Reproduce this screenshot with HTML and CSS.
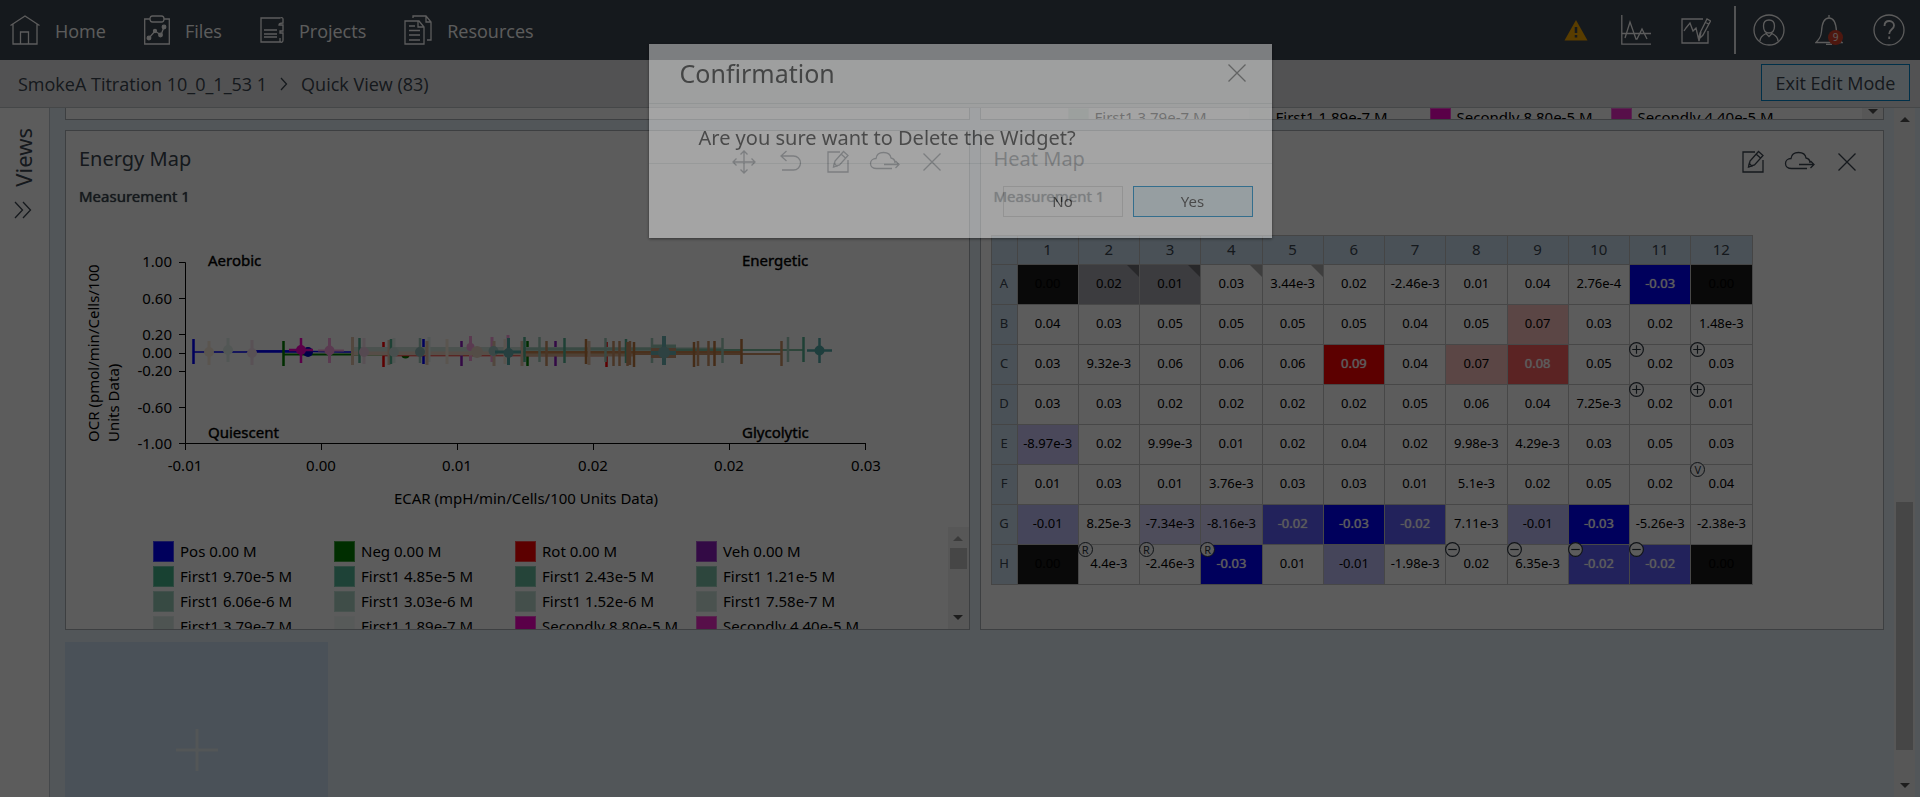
FILE: index.html
```html
<!DOCTYPE html>
<html lang="en">
<head>
<meta charset="utf-8">
<title>Quick View</title>
<link rel="stylesheet" href="styles.css">
</head>
<body>
<svg class="defs" width="0" height="0" aria-hidden="true">
  <symbol id="i-move" viewBox="0 0 24 24"><path d="M12 1v22M1 12h22M8.500 4.500 12 1l3.500 3.500M8.500 19.500 12 23l3.500-3.500M4.500 8.500 1 12l3.500 3.500M19.500 8.500 23 12l-3.500 3.500"/></symbol>
  <symbol id="i-undo" viewBox="0 0 24 24"><path d="M7.500 1 2 6l5.500 5M2 6h12.500a7 7 0 0 1 0 14H3"/></symbol>
  <symbol id="i-edit" viewBox="0 0 24 24"><path d="M14 2H2v20h20V10M8 16.500 9 11l8.500-9.500 4.500 4L13.500 15 8 16.500M15 4l4.500 4"/><path d="m7.500 17 .8-3.500 2.500 2.500z" class="solid"/></symbol>
  <symbol id="i-cloud" viewBox="0 0 32 24"><path d="M23 18.500H7.500C4 18.500 1.500 16.500 1.500 13.500S4 8.500 7 8.500C7.500 4.500 10.500 2.500 14.500 2.500s7 2 7.500 5.500c2.500.5 4 2 4 5M15 14.500h15M26.500 11l3.500 3.500-3.500 3.500"/></symbol>
  <symbol id="i-close" viewBox="0 0 18 18"><path d="m.5.5 17 17M17.500.5l-17 17"/></symbol>
  <symbol id="i-plus" viewBox="0 0 16 16"><circle cx="8" cy="8" r="6.500"/><path d="M4 8h8M8 4v8"/></symbol>
  <symbol id="i-minus" viewBox="0 0 16 16"><circle cx="8" cy="8" r="6.500"/><path d="M4 8h8"/></symbol>
</svg>

<header class="topbar">
  <nav class="nav">
    <a class="nav-item" href="#">
      <svg class="icon" width="30" height="30" viewBox="0 0 30 30"><path d="M.5 10.500 15 1l14.500 9.500M3 9v20h24V9M10.500 29V17h8v12"/></svg>
      <span>Home</span></a>
    <a class="nav-item" href="#">
      <svg class="icon" width="26" height="30" viewBox="0 0 26 30"><path d="M6 4H.7v25h24.600V4H20M8.500 1h9q2.500 0 2.500 3t-2.500 3h-9Q6 7 6 4t2.500-3zM5 23l6-7 6 4 3-8"/><g class="solid"><circle cx="5" cy="23" r="1.800"/><circle cx="11" cy="16" r="1.500"/><circle cx="16.500" cy="20" r="1.800"/><circle cx="20" cy="12" r="1.800"/></g></svg>
      <span>Files</span></a>
    <a class="nav-item" href="#">
      <svg class="icon" width="24" height="30" viewBox="0 0 24 30"><path d="M20 3H1v24h20M20 3q3-1 3 1v4q-4 0-4 2 0 0 4 0v6h-3v2h3v7q0 3-3 2v-4M4 15h13M4 19h13M4 22h13"/></svg>
      <span>Projects</span></a>
    <a class="nav-item" href="#">
      <svg class="icon" width="28" height="30" viewBox="0 0 28 30"><path d="M1 6h14l5 6v17H1zM14 6v6h6M5 11h6M5 15.500h11M5 20h11M5 25h11M9 3V1h13l5 6v18h-4M22 1v6h5"/></svg>
      <span>Resources</span></a>
  </nav>
  <div class="tools">
    <button class="tool" aria-label="Warnings"><svg width="24" height="22" viewBox="0 0 24 22"><path d="M12 1 23.500 21.500H.5z" fill="#f5a800"/><path d="M12 8v6M12 16v2.500" stroke="#3b4550" stroke-width="2.500"/></svg></button>
    <button class="tool" aria-label="Chart"><svg class="icon" width="30" height="30" viewBox="0 0 30 30"><path d="M.8 0v29.200H30M1 18.500h29M4 23 9 7l6 17h1l5-10 5 10"/></svg></button>
    <button class="tool" aria-label="Edit chart"><svg class="icon" width="30" height="30" viewBox="0 0 30 30"><path d="M22 4H1v24h26V16M3 16l2-3 4-5 3 8 3-3 3 13 2-9M17.500 24.500 19 18 26 4l3.500 2L22 20l-4.500 4.500M24 7l3.500 2"/></svg></button>
    <span class="divider"></span>
    <button class="tool" aria-label="Account"><svg class="icon" width="32" height="32" viewBox="0 0 32 32"><circle cx="16" cy="16" r="15"/><path d="M16 6c-4 0-5.500 3-5.500 6 0 4 2 7 5.500 7s5.500-3 5.500-7c0-3-1.500-6-5.500-6zM7 27c0-4 3-6 6-7.500l3 3 3-3c3 1.500 6 3.500 6 7.500"/></svg></button>
    <button class="tool bell" aria-label="Notifications"><svg class="icon" width="28" height="30" viewBox="0 0 28 30"><path d="M14 0v3M1 27.500h26c-4-4-5-6-5.500-11C21 7 19 3 14 3S7 7 6.500 16.500C6 21.500 5 23.500 1 27.500zM11 29.500h6"/></svg><span class="count">9</span></button>
    <button class="tool" aria-label="Help"><svg class="icon" width="32" height="32" viewBox="0 0 32 32"><circle cx="16" cy="16" r="15"/><path d="M11.500 12c0-3 2-5 4.800-5s4.700 2 4.700 4.500c0 4-4.800 3.500-4.800 8.500M16.200 22.500v2.500" stroke-width="1.800"/></svg></button>
  </div>
</header>

<div class="crumbbar">
  <a class="crumb" href="#">SmokeA Titration 10_0_1_53 1</a>
  <svg class="icon dark" width="8" height="14" viewBox="0 0 8 14"><path d="m1 1 5.500 6L1 13"/></svg>
  <span class="crumb">Quick View (83)</span>
  <button class="exit">Exit Edit Mode</button>
</div>

<div class="workspace">
  <aside class="side">
    <span class="side-label">Views</span>
    <button class="side-toggle" aria-label="Expand views"><svg class="icon dark" width="18" height="18" viewBox="0 0 18 18"><path d="m1 1 7.500 8L1 17M9 1l7.500 8L9 17"/></svg></button>
  </aside>

  <main class="board">
    <section class="panel cut"></section>
    <section class="panel cut legend-wrap">
      <ul class="legend">
        <li><i class="c12"></i>First1 3.79e-7 M</li><li><i class="c13"></i>First1 1.89e-7 M</li><li><i class="c14"></i>Secondly 8.80e-5 M</li><li><i class="c15"></i>Secondly 4.40e-5 M</li>
      </ul>
      <div class="bar"><b class="down"></b></div>
    </section>

    <section class="panel">
      <div class="panel-head">
        <h2>Energy Map</h2>
        <div class="actions">
          <button aria-label="Move"><svg class="icon dark" width="24" height="24"><use href="#i-move"/></svg></button>
          <button aria-label="Undo"><svg class="icon dark" width="24" height="24"><use href="#i-undo"/></svg></button>
          <button aria-label="Edit"><svg class="icon dark" width="24" height="24"><use href="#i-edit"/></svg></button>
          <button aria-label="Export"><svg class="icon dark" width="32" height="24"><use href="#i-cloud"/></svg></button>
          <button aria-label="Delete"><svg class="icon dark" width="18" height="18"><use href="#i-close"/></svg></button>
        </div>
      </div>
      <h3>Measurement 1</h3>
      <svg class="chart" width="882" height="312" viewBox="66 215 882 312">
        <g class="axis"><path d="M179 262.500h6.500v181h680M179 298.500h6.500M179 334.500h6.500M179 353.500h6.500M179 371.500h6.500M179 407.500h6.500M179 443.500h6.500v6.500M321.500 443v7M457.500 443v7M593.500 443v7M729.500 443v7M865.500 443v7"/></g>
        <g class="ylab"><text x="172" y="267">1.00</text><text x="172" y="304">0.60</text><text x="172" y="340">0.20</text><text x="172" y="358">0.00</text><text x="172" y="376">-0.20</text><text x="172" y="413">-0.60</text><text x="172" y="449">-1.00</text></g>
        <g class="xlab"><text x="185" y="471">-0.01</text><text x="321" y="471">0.00</text><text x="457" y="471">0.01</text><text x="593" y="471">0.02</text><text x="729" y="471">0.02</text><text x="866" y="471">0.03</text><text x="526" y="504">ECAR (mpH/min/Cells/100 Units Data)</text></g>
        <text transform="translate(99 442) rotate(-90)">OCR (pmol/min/Cells/100</text>
        <text transform="translate(119 442) rotate(-90)">Units Data)</text>
        <g fill="none">
          <path stroke="#0000ff" stroke-width="1.500" d="M193 352h12M213 352h11M232 352h14l10-1h27l60 1h40"/>
          <path stroke="#0000ff" stroke-width="2.500" d="M252 351.500h52M193.500 339v25M423.500 339v25"/>
          <path stroke="#008000" stroke-width="2" d="M283 354.500h215"/>
          <circle cx="405.500" cy="354" r="4.500" fill="#008000"/>
          <path stroke="#008000" stroke-width="2.500" d="M283.500 341v25M527.500 341v25"/>
          <path stroke="#ff0000" stroke-width="1.500" d="M383 355.500h224"/>
          <path stroke="#ff0000" stroke-width="2.500" d="M383.500 342v25M606.500 342v25"/>
          <path stroke="#8e1cc0" stroke-width="2.500" d="M461.500 341v25M555.500 341v25"/>
          <path stroke="#faa1de" stroke-width="3" d="M458 350h66M329.500 338v25M470.500 336v25M492 337v25M508 335v20"/>
          <path stroke="#cfe3dc" stroke-width="5" d="M352 349.500h300"/>
          <path stroke="#9fcbb9" stroke-width="3" d="M522 349h200"/>
          <path stroke="#7dbfa0" stroke-width="2" d="M652 350h152"/>
          <path stroke="#efd6c4" stroke-width="4" d="M352 353.500h170"/>
          <path stroke="#cc8850" stroke-width="3" d="M522 352.500h220"/>
          <path stroke="#d9b394" stroke-width="3" d="M522 355h112"/>
          <path stroke="#cc9468" stroke-width="2" d="M634 354h148"/>
          <path stroke="#f8eadc" stroke-width="3" d="M209 341v24M505 339v25M447 339v25"/>
          <path stroke="#e4f0ec" stroke-width="3" d="M228 338v24M394 338v25M429 337v25"/>
          <path stroke="#f6e0ec" stroke-width="3" d="M252 340v25M364 338v26"/>
          <path stroke="#e3c4ab" stroke-width="3" d="M352.500 337v28M389 340v25M427 341v24M494 341v25M522 341v25M589 341v24"/>
          <path stroke="#55b394" stroke-width="2.500" d="M359.500 338v25M391 339v25M524.500 337v25M564.500 338v25M626 339v24M803.500 337v25"/>
          <path stroke="#9fcbb9" stroke-width="2.500" d="M420 338v25M539.500 337v25M605.500 338v24M652 338v25M722.500 338v25M788 337v25"/>
          <path stroke="#c07a40" stroke-width="2.500" d="M586 339v25M634 342v25M694 342v25M714.500 341v25M741.500 339v25"/>
          <path stroke="#cc9468" stroke-width="2.500" d="M546.500 341v25M613.500 341v25M619.500 341v25M627.500 342v24M630 341v24M698 341v25M708.500 341v25M781.500 341v25"/>
        </g>
        <g>
          <circle cx="308" cy="352" r="5" fill="#0000c8"/>
          <path stroke="#fa00c8" stroke-width="2.500" d="M289 350h24M301 338v25"/><circle cx="301" cy="350" r="5" fill="#fa00c8"/>
          <path stroke="#faa1de" stroke-width="2" d="M318 350.500h26"/><circle cx="329.500" cy="350.500" r="5" fill="#faa1de"/>
          <circle cx="209" cy="352" r="5" fill="#f8eadc"/><circle cx="228" cy="350" r="5" fill="#e4f0ec"/><circle cx="252" cy="353" r="5" fill="#f6e0ec"/>
          <circle cx="364" cy="352" r="5" fill="#eccbe0"/><circle cx="394" cy="352" r="5" fill="#c8dcd8"/>
          <circle cx="420" cy="352" r="5" fill="#8fb8b6"/><circle cx="470.500" cy="347" r="4" fill="#faa1de"/><circle cx="477" cy="352" r="6" fill="#e9d5c5"/>
          <circle cx="493.500" cy="351" r="5" fill="#a3c7c6"/>
          <path stroke="#54acaa" stroke-width="3" d="M508.500 338v27M495 352h26"/><circle cx="508.500" cy="353" r="5" fill="#6bb0b0"/>
          <path fill="#9ccab8" d="M651 344.500h25v4h-25z"/><path fill="#c99a74" d="M651 348h25v10h-25z"/>
          <path stroke="#6cb4b4" stroke-width="4" d="M651 353h25M664 336v29"/><circle cx="664" cy="352.500" r="6" fill="#80b6b6"/>
          <path stroke="#54acaa" stroke-width="2.500" d="M807 350.500h25M819.500 338v25"/><circle cx="819.500" cy="350.500" r="5" fill="#54acaa"/>
        </g>
        <g class="strong"><text x="208" y="266">Aerobic</text><text x="742" y="266">Energetic</text><text x="208" y="438">Quiescent</text><text x="742" y="438">Glycolytic</text></g>
      </svg>
      <div class="legend-wrap">
        <ul class="legend">
          <li><i class="c0"></i>Pos 0.00 M</li><li><i class="c1"></i>Neg 0.00 M</li><li><i class="c2"></i>Rot 0.00 M</li><li><i class="c3"></i>Veh 0.00 M</li>
          <li><i class="c4"></i>First1 9.70e-5 M</li><li><i class="c5"></i>First1 4.85e-5 M</li><li><i class="c6"></i>First1 2.43e-5 M</li><li><i class="c7"></i>First1 1.21e-5 M</li>
          <li><i class="c8"></i>First1 6.06e-6 M</li><li><i class="c9"></i>First1 3.03e-6 M</li><li><i class="c10"></i>First1 1.52e-6 M</li><li><i class="c11"></i>First1 7.58e-7 M</li>
          <li><i class="c12"></i>First1 3.79e-7 M</li><li><i class="c13"></i>First1 1.89e-7 M</li><li><i class="c14"></i>Secondly 8.80e-5 M</li><li><i class="c15"></i>Secondly 4.40e-5 M</li>
        </ul>
        <div class="bar"><b class="up off"></b><div class="track"><div class="thumb"></div></div><b class="down"></b></div>
      </div>
    </section>

    <section class="panel">
      <div class="panel-head">
        <h2>Heat Map</h2>
        <div class="actions">
          <button aria-label="Edit"><svg class="icon dark" width="24" height="24"><use href="#i-edit"/></svg></button>
          <button aria-label="Export"><svg class="icon dark" width="32" height="24"><use href="#i-cloud"/></svg></button>
          <button aria-label="Delete"><svg class="icon dark" width="18" height="18"><use href="#i-close"/></svg></button>
        </div>
      </div>
      <h3>Measurement 1</h3>
      <table class="heat">
        <thead><tr><th class="corner"></th><th>1</th><th>2</th><th>3</th><th>4</th><th>5</th><th>6</th><th>7</th><th>8</th><th>9</th><th>10</th><th>11</th><th>12</th></tr></thead>
        <tbody>
        <tr><th>A</th><td class="off">0.00</td><td class="gray flag">0.02</td><td class="gray flag">0.01</td><td class="flag">0.03</td><td class="flag">3.44e-3</td><td>0.02</td><td>-2.46e-3</td><td>0.01</td><td>0.04</td><td>2.76e-4</td><td class="b5">-0.03</td><td class="off">0.00</td></tr>
        <tr><th>B</th><td>0.04</td><td>0.03</td><td>0.05</td><td>0.05</td><td>0.05</td><td>0.05</td><td>0.04</td><td>0.05</td><td class="r1">0.07</td><td>0.03</td><td>0.02</td><td>1.48e-3</td></tr>
        <tr><th>C</th><td>0.03</td><td>9.32e-3</td><td>0.06</td><td>0.06</td><td>0.06</td><td class="r5">0.09</td><td>0.04</td><td class="r1">0.07</td><td class="r3">0.08</td><td>0.05</td><td><svg class="mark"><use href="#i-plus"/></svg>0.02</td><td><svg class="mark"><use href="#i-plus"/></svg>0.03</td></tr>
        <tr><th>D</th><td>0.03</td><td>0.03</td><td>0.02</td><td>0.02</td><td>0.02</td><td>0.02</td><td>0.05</td><td>0.06</td><td>0.04</td><td>7.25e-3</td><td><svg class="mark"><use href="#i-plus"/></svg>0.02</td><td><svg class="mark"><use href="#i-plus"/></svg>0.01</td></tr>
        <tr><th>E</th><td class="b1">-8.97e-3</td><td>0.02</td><td>9.99e-3</td><td>0.01</td><td>0.02</td><td>0.04</td><td>0.02</td><td>9.98e-3</td><td>4.29e-3</td><td>0.03</td><td>0.05</td><td>0.03</td></tr>
        <tr><th>F</th><td>0.01</td><td>0.03</td><td>0.01</td><td>3.76e-3</td><td>0.03</td><td>0.03</td><td>0.01</td><td>5.1e-3</td><td>0.02</td><td>0.05</td><td>0.02</td><td><span class="mark letter">V</span>0.04</td></tr>
        <tr><th>G</th><td class="b2">-0.01</td><td>8.25e-3</td><td class="b0">-7.34e-3</td><td class="b0">-8.16e-3</td><td class="b3">-0.02</td><td class="b5">-0.03</td><td class="b3">-0.02</td><td>7.11e-3</td><td class="b2">-0.01</td><td class="b5">-0.03</td><td>-5.26e-3</td><td>-2.38e-3</td></tr>
        <tr><th>H</th><td class="off">0.00</td><td><span class="mark letter">R</span>4.4e-3</td><td><span class="mark letter">R</span>-2.46e-3</td><td class="b5"><span class="mark letter">R</span>-0.03</td><td>0.01</td><td class="b2">-0.01</td><td>-1.98e-3</td><td><svg class="mark"><use href="#i-minus"/></svg>0.02</td><td><svg class="mark"><use href="#i-minus"/></svg>6.35e-3</td><td class="b3"><svg class="mark"><use href="#i-minus"/></svg>-0.02</td><td class="b3"><svg class="mark"><use href="#i-minus"/></svg>-0.02</td><td class="off">0.00</td></tr>
        </tbody>
      </table>
    </section>

    <button class="add" aria-label="Add widget"><svg width="42" height="42" viewBox="0 0 42 42"><path d="M21 0v42M0 21h42" stroke="#e6eef2" stroke-width="3"/></svg></button>
  </main>
  <div class="bar page-bar"><b class="up"></b><div class="track"><div class="thumb"></div></div><b class="down"></b></div>
</div>

<div class="overlay">
  <div class="dialog" role="dialog" aria-labelledby="dlg-title">
    <div class="dialog-head"><h1 id="dlg-title">Confirmation</h1><button class="x" aria-label="Close"><svg class="icon" width="18" height="18"><use href="#i-close"/></svg></button></div>
    <p class="dialog-body">Are you sure want to Delete the Widget?</p>
    <div class="dialog-foot"><button class="btn">No</button><button class="btn primary">Yes</button></div>
  </div>
</div>
</body>
</html>
```

FILE: styles.css
```css
* { box-sizing: border-box; }
body {
  margin: 0;
  height: 100vh;
  display: flex;
  flex-direction: column;
  overflow: hidden;
  background: #e4eff7;
  color: #3b4550;
  font-family: "Noto Sans", "Open Sans", sans-serif;
  font-size: 15px;
}
button { font: inherit; color: inherit; background: none; border: 0; padding: 0; }
a { color: inherit; text-decoration: none; }
h1, h2, h3, p, ul { margin: 0; padding: 0; font-weight: 400; }
svg { display: block; }
.defs { position: absolute; }
.icon { fill: none; stroke: #fff; stroke-width: 1.3; }
.icon.dark { stroke: #3b4550; }
.solid { fill: #fff; }
.dark .solid { fill: #3b4550; }

.topbar {
  flex: none;
  height: 60px;
  padding: 0 1px 0 10px;
  display: flex;
  align-items: center;
  justify-content: space-between;
  background: #3b4550;
  color: #fff;
  font-family: "Open Sans", "Noto Sans", sans-serif;
  font-size: 18px;
}
.nav { display: flex; gap: 38px; }
.nav-item { display: flex; align-items: center; gap: 15px; }
.nav-item span { padding-top: 2px; }
.tools { display: flex; align-items: center; }
.tool { position: relative; width: 60px; display: flex; justify-content: center; }
.divider { width: 2px; height: 48px; margin: 0 3px 0 8px; background: #e4e6e8; }
.count {
  position: absolute;
  left: 29px;
  top: 15px;
  width: 15px;
  height: 15px;
  border-radius: 50%;
  background: #d9412b;
  font-size: 10px;
  line-height: 15px;
}

.crumbbar {
  flex: none;
  height: 48px;
  padding: 0 10px 0 18px;
  display: flex;
  align-items: center;
  gap: 13px;
  background: #e3e4e6;
  border-bottom: 1px solid #c0c4c8;
  font-family: "Open Sans", "Noto Sans", sans-serif;
  font-size: 18px;
}
.exit {
  margin-left: auto;
  width: 149px;
  height: 37px;
  margin-bottom: 2px;
  border: 1px solid #0085ca;
  background: #e4f2f8;
}

.workspace { flex: 1; min-height: 0; display: flex; }
.side {
  width: 50px;
  flex: none;
  padding: 20px 3px 0 0;
  display: flex;
  flex-direction: column;
  align-items: center;
  gap: 14px;
  background: #fff;
  border-right: 1px solid #c0c8d0;
}
.side-label { writing-mode: vertical-rl; transform: rotate(180deg); font-size: 22px; line-height: 30px; }

.board {
  flex: 1;
  min-width: 0;
  padding: 0 10px 0 15px;
  display: grid;
  grid-template-columns: 1fr 1fr;
  grid-template-rows: 12px 500px 216px;
  gap: 10px;
  align-content: start;
  overflow: hidden;
}
.panel { background: #fff; border: 1px solid #a9afb5; overflow: hidden; display: flex; flex-direction: column; min-width: 0; }
.panel.cut { border-top: 0; flex-direction: row; }
.panel-head { display: flex; align-items: center; justify-content: space-between; height: 52px; padding: 4px 13px 0 13px; flex: none; }
h2 { font-size: 20px; line-height: 28px; }
h3 { font-size: 15px; line-height: 22px; height: 32px; flex: none; padding: 2px 13px 0; text-shadow: 0 0 1px #3b4550; }
.actions { display: flex; align-items: center; padding-top: 6px; }
.actions button { width: 47px; display: flex; justify-content: center; }

.chart { flex: none; font-size: 15px; }
.axis { fill: none; stroke: #000; stroke-width: 1; }
.ylab { text-anchor: end; }
.xlab { text-anchor: middle; }
.strong { stroke: #000; stroke-width: 0.4; }

.legend-wrap { display: flex; flex: 1; min-height: 0; color: #000; }
.legend {
  flex: 1;
  list-style: none;
  padding: 14px 0 0 87px;
  display: grid;
  grid-template-columns: repeat(4, 181px);
  grid-auto-rows: 25px;
  align-content: start;
  overflow: hidden;
}
.cut .legend { padding-top: 0; }
.legend li { display: flex; gap: 6px; line-height: 20px; white-space: nowrap; }
.cut .legend li { line-height: 18px; }
.legend i { width: 21px; height: 21px; border: 1px solid rgba(255, 255, 255, 0.3); }
.c0 { background: #0000ff; } .c1 { background: #008000; } .c2 { background: #ff0000; } .c3 { background: #8e1cc0; }
.c4 { background: #43b58c; } .c5 { background: #55b898; } .c6 { background: #66bc9e; } .c7 { background: #7cc2a8; }
.c8 { background: #9acdbb; } .c9 { background: #aed6c8; } .c10 { background: #bcdcd0; } .c11 { background: #cce4da; }
.c12 { background: #d8e9e2; } .c13 { background: #f2f8f6; } .c14 { background: #fa00c8; } .c15 { background: #f02aca; }

.bar { width: 21px; flex: none; padding: 9px 2px; background: #f1f1f1; display: flex; flex-direction: column; align-items: center; }
.bar b { border: 5px solid transparent; width: 0; height: 0; flex: none; }
.bar .up { border-top: 0; border-bottom-color: #505050; }
.bar .down { border-bottom: 0; border-top-color: #505050; }
.bar .up.off { border-bottom-color: #a3a3a3; }
.bar .track { flex: 1; align-self: stretch; padding: 7px 0; }
.bar .thumb { height: 21px; background: #c1c1c1; }
.cut .bar { padding-top: 1px; }
.page-bar { margin-right: 5px; }
.page-bar .track { display: flex; flex-direction: column; justify-content: flex-end; padding-bottom: 33px; }
.page-bar .thumb { height: 40%; }

.heat { width: 762px; margin: 20px 0 0 10px; border-collapse: collapse; table-layout: fixed; text-align: center; font-size: 13px; color: #000; }
.heat th, .heat td { border: 1px solid #c4c4c4; padding: 0 0 3px; height: 40px; position: relative; white-space: nowrap; }
.heat th { background: #cde1f0; color: #3b4550; font-weight: 400; border-color: #c0c0c0; }
.heat thead th { height: 29px; padding-bottom: 2px; font-size: 15px; }
.heat .corner { width: 26px; }
.heat .off { background: #191919; color: #000; }
.heat .gray { background: #a6a6b0; }
.r1 { background: #fcc2be; }
.heat .r3 { background: #fc6262; }
.heat .r5 { background: #ff0000; }
.b0 { background: #d8d4fb; }
.b1 { background: #cdc8fa; }
.b2 { background: #c0c0fa; }
.heat .b3 { background: #6060fb; }
.heat .b5 { background: #0000ff; }
.heat .r3, .heat .r5, .heat .b3, .heat .b5 { color: #fff; text-shadow: 0 0 1px #fff; }
.flag::after { content: ""; position: absolute; right: 0; top: 0; border-top: 12px solid rgba(0, 0, 0, 0.33); border-left: 12px solid transparent; }
.mark { position: absolute; left: -2px; top: -4px; width: 17px; height: 17px; fill: #fff; stroke: #2c353f; stroke-width: 1.1; }
.letter { left: -1px; top: -3px; width: 15px; height: 15px; border: 1px solid #2c353f; border-radius: 50%; background: #fff; color: #2c353f; font-size: 11px; line-height: 13px; text-shadow: none; }

.add { width: 263px; height: 216px; margin: 2px 0 0; background: #cde1f3; display: flex; align-items: center; justify-content: center; }

.overlay { position: fixed; inset: 0; background: rgba(0, 0, 0, 0.64); display: flex; justify-content: center; align-items: flex-start; padding-top: 44px; }
.dialog { width: 623px; background: #fff; opacity: 0.44; box-shadow: 0 1px 3px #000; color: #333; }
.dialog-head { height: 60px; padding: 0 26px 2px 31px; display: flex; align-items: center; justify-content: space-between; border-bottom: 1px solid #e4e8e8; }
.dialog-head h1 { font-size: 25px; line-height: 34px; }
.dialog .icon { stroke: #777; }
.dialog-body { height: 60px; padding: 20px 50px 0; font-size: 20px; line-height: 28px; border-bottom: 1px solid #e4e8e8; }
.dialog-foot { padding: 22px 19px 21px; display: flex; justify-content: flex-end; gap: 10px; }
.btn { width: 120px; height: 31px; padding-bottom: 2px; border: 1px solid #d8d8d8; font-size: 15px; }
.primary { border-color: #0085ca; background: #e0f2f8; }
```
